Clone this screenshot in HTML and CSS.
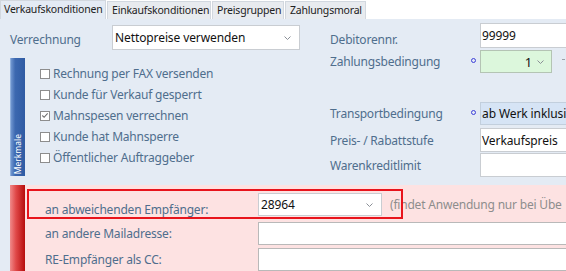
FILE: index.html
```html
<!DOCTYPE html>
<html lang="de">
<head>
    <meta charset="UTF-8">
    <title>Verkaufskonditionen</title>
    <link rel="stylesheet" href="styles.css">
</head>
<body>
    <!-- Reiter -->
    <div class="tabs">
        <div class="tab active w106">Verkaufskonditionen</div>
        <div class="tab w104">Einkaufskonditionen</div>
        <div class="tab w72">Preisgruppen</div>
        <div class="tab w81">Zahlungsmoral</div>
    </div>

    <div class="panel">
        <div class="top">
            <!-- linke Spalte -->
            <div class="left">
                <div class="row-verr">
                    <span class="label">Verrechnung</span>
                    <div class="field select w188">
                        <span>Nettopreise verwenden</span>
                        <svg class="chev" width="7" height="4" viewBox="0 0 7 4"><polyline points="0.5,0.5 3.5,3.5 6.5,0.5" fill="none" stroke="#8a8f96" stroke-width="1"/></svg>
                    </div>
                </div>
                <div class="group">
                    <div class="group-bar blue"><span>Merkmale</span></div>
                    <ul class="checks">
                        <li><span class="box"></span>Rechnung per FAX versenden</li>
                        <li><span class="box"></span>Kunde für Verkauf gesperrt</li>
                        <li><span class="box checked">
                            <svg width="9" height="9" viewBox="0 0 9 9"><polyline points="1.5,4.5 3.5,6.5 7.5,2" fill="none" stroke="#6b6b6b" stroke-width="1.2"/></svg>
                        </span>Mahnspesen verrechnen</li>
                        <li><span class="box"></span>Kunde hat Mahnsperre</li>
                        <li><span class="box"></span>Öffentlicher Auftraggeber</li>
                    </ul>
                </div>
            </div>

            <!-- rechte Spalte -->
            <div class="right">
                <div class="frow r1">
                    <span class="label low">Debitorennr.</span>
                    <span class="dot-space"></span>
                    <div class="field wide">99999</div>
                </div>
                <div class="frow r2">
                    <span class="label">Zahlungsbedingung</span>
                    <span class="dot-space"><span class="dot"></span></span>
                    <div class="field green">
                        <span class="num">1</span>
                        <svg class="chev" width="7" height="4" viewBox="0 0 7 4"><polyline points="0.5,0.5 3.5,3.5 6.5,0.5" fill="none" stroke="#8a8f96" stroke-width="1"/></svg>
                    </div>
                    <span class="more"></span>
                </div>
                <div class="frow r3">
                    <span class="label">Transportbedingung</span>
                    <span class="dot-space"><span class="dot"></span></span>
                    <div class="field wide blue-bg">ab Werk inklusi</div>
                </div>
                <div class="frow r4">
                    <span class="label">Preis- / Rabattstufe</span>
                    <span class="dot-space"></span>
                    <div class="field wide">Verkaufspreis</div>
                </div>
                <div class="frow r5">
                    <span class="label">Warenkreditlimit</span>
                    <span class="dot-space"></span>
                    <div class="field wide"></div>
                </div>
            </div>
        </div>

        <!-- Rechnungsempfänger -->
        <div class="extra">
            <div class="group-bar red"></div>
            <div class="extra-rows">
                <div class="erow e1">
                    <span class="elabel low">an abweichenden Empfänger:</span>
                    <div class="field select w124">
                        <span>28964</span>
                        <svg class="chev" width="7" height="4" viewBox="0 0 7 4"><polyline points="0.5,0.5 3.5,3.5 6.5,0.5" fill="none" stroke="#8a8f96" stroke-width="1"/></svg>
                    </div>
                    <span class="note">(findet Anwendung nur bei Übe</span>
                </div>
                <div class="erow e2">
                    <span class="elabel">an andere Mailadresse:</span>
                    <div class="field line"></div>
                </div>
                <div class="erow e3">
                    <span class="elabel">RE-Empfänger als CC:</span>
                    <div class="field line"></div>
                </div>
            </div>
            <!-- Markierung -->
            <div class="highlight"></div>
        </div>
    </div>
</body>
</html>
```

FILE: styles.css
```css
*{
    padding: 0;
    margin: 0;
    list-style: none;
    box-sizing: border-box;
}
html, body{
    width: 566px;
    height: 271px;
    overflow: hidden;
}
body{
    background: #e4ebf4;
    font-family: "Noto Sans", "Open Sans", sans-serif;
    font-size: 12px;
    color: #111;
}

/* Reiter */
.tabs{
    display: flex;
    align-items: flex-end;
    height: 19px;
    background: #fff;
}
.tab{
    flex: none;
    height: 18px;
    margin-left: 1px;
    padding-left: 4px;
    background: #e8ebef;
    border: 1px solid #d2d8df;
    border-bottom: none;
    font-size: 10.5px;
    letter-spacing: -0.2px;
    line-height: 16px;
    color: #222;
    white-space: nowrap;
}
.tab.active{
    height: 19px;
    margin-left: 0;
    padding-left: 3px;
    background: #e4ebf4;
}
.w106{ width: 106px; }
.w104{ width: 104px; }
.w72{ width: 72px; }
.w81{ width: 81px; }

/* Felder */
.label, .elabel{
    color: #4f6e8d;
    font-size: 12px;
    letter-spacing: -0.2px;
    white-space: nowrap;
}
.field{
    flex: none;
    background: #fff;
    border: 1px solid #c9cdd2;
    font-size: 12px;
    letter-spacing: -0.1px;
    padding-left: 2px;
    display: flex;
    align-items: center;
    white-space: nowrap;
    overflow: hidden;
}
.select{
    justify-content: space-between;
    padding-right: 8px;
}
.chev{
    flex: none;
}
.w188{ width: 188px; height: 25px; }
.w124{ width: 124px; height: 23px; }

.top{
    display: flex;
}
.left{
    flex: none;
    width: 330px;
    padding-left: 10px;
}
.row-verr{
    display: flex;
    align-items: flex-end;
    margin-top: 6px;
}
.row-verr .label{
    width: 102px;
    padding-bottom: 2px;
}

/* Merkmale */
.group{
    display: flex;
    height: 118px;
    margin-top: 8px;
}
.group-bar{
    width: 15px;
    flex: none;
    position: relative;
}
.group-bar.blue{
    background: linear-gradient(to right, #6f95cf, #3c68b0 30%, #2f5ba3);
    border-left: 1px solid #8fb0de;
}
.group-bar.blue span{
    position: absolute;
    left: 1px;
    bottom: 2px;
    writing-mode: vertical-rl;
    transform: rotate(180deg);
    color: #fff;
    font-size: 8.5px;
    line-height: 12px;
}
.checks{
    padding-left: 15px;
    padding-top: 5px;
}
.checks li{
    height: 21px;
    display: flex;
    align-items: center;
    color: #4f6e8d;
    font-size: 12px;
    letter-spacing: -0.2px;
}
.box{
    width: 10px;
    height: 10px;
    margin-right: 3px;
    background: #fff;
    border: 1px solid #8d8d8d;
    display: flex;
    align-items: center;
    justify-content: center;
}

/* rechte Spalte */
.right{
    flex: 1;
    min-width: 0;
    padding-top: 4px;
}
.frow{
    display: flex;
    align-items: center;
}
.frow .label{
    flex: none;
    width: 141px;
}
.label.low{
    padding-top: 7px;
}
.dot-space{
    flex: none;
    width: 9px;
    display: flex;
    align-items: center;
    margin-top: -3px;
}
.dot{
    width: 5px;
    height: 5px;
    border: 1.5px solid #3d3fd8;
    border-radius: 50%;
}
.field.wide{
    width: 120px;
    padding-left: 1px;
}
.r1 .field{ height: 25px; }
.r2{ margin-top: 2px; }
.r2 .field{ height: 23px; }
.r3{ margin-top: 29px; }
.r3 .field{ height: 23px; }
.r4{ margin-top: 3px; }
.r4 .field{ height: 24px; }
.r5{ margin-top: 1px; }
.r5 .field{ height: 24px; }
.field.green{
    width: 72px;
    background: #dcf7dc;
    border-color: #b4c4b4;
    justify-content: flex-end;
    padding-right: 7px;
}
.field.green .num{
    margin-right: 5px;
    font-size: 13px;
}
.field.blue-bg{
    background: #d6e4f5;
    border-color: #c2cfdd;
}
.more{
    flex: none;
    margin-left: 10px;
    width: 3px;
    height: 5px;
    border-top: 1px solid #9aa0a8;
}

/* Rechnungsempfänger */
.extra{
    position: relative;
    display: flex;
    margin-top: 8px;
    margin-left: 10px;
    height: 90px;
}
.group-bar.red{
    background: linear-gradient(to right, #f08a8a, #e04848 40%, #b60d0d);
}
.extra-rows{
    flex: 1;
    min-width: 0;
    background: #fde2e2;
    padding-top: 6px;
}
.erow{
    display: flex;
    align-items: center;
}
.elabel{
    flex: none;
    width: 233px;
    padding-left: 20px;
}
.elabel.low{
    padding-top: 10px;
}
.note{
    margin-left: 8px;
    color: #8d8d8d;
    font-size: 12px;
    letter-spacing: -0.2px;
    white-space: nowrap;
}
.e2{ margin-top: 4px; }
.e3{ margin-top: 3px; }
.field.line{
    flex: 1;
    height: 23px;
    border-color: #b9b9b9;
    border-right: none;
}
.highlight{
    position: absolute;
    left: 17px;
    top: 4px;
    width: 376px;
    height: 30px;
    border: 2px solid #e8141c;
}
```
